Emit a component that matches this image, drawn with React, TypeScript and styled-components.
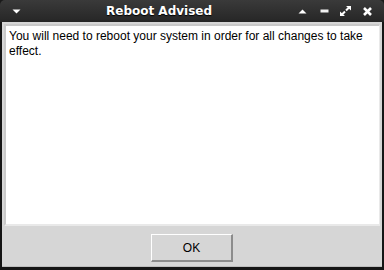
import React from "react";
import styled, { createGlobalStyle } from "styled-components";

const GlobalStyle = createGlobalStyle`
  html, body {
    margin: 0;
    padding: 0;
    background: #1a1a1a;
  }
`;

const Window = styled.div`
  width: 384px;
  height: 270px;
  display: flex;
  flex-direction: column;
  background: #151515;
  border-radius: 5px 5px 0 0;
  overflow: hidden;
  box-sizing: border-box;
`;

const TitleBar = styled.div`
  height: 22px;
  display: flex;
  align-items: center;
  position: relative;
  background: linear-gradient(#3a3a3a, #262626);
  color: #fff;
  font-family: "DejaVu Sans", sans-serif;
  font-weight: bold;
  font-size: 12px;
`;

const Title = styled.div`
  position: absolute;
  left: 106px;
  top: 4px;
  text-shadow: 0 1px 1px #000;
`;

const MenuButton = styled.div`
  width: 32px;
  display: flex;
  justify-content: center;
`;

const Controls = styled.div`
  margin-left: auto;
  display: flex;
  align-items: center;
  padding-right: 6px;
`;

const Control = styled.div`
  width: 21.5px;
  height: 22px;
  display: flex;
  align-items: center;
  justify-content: center;
`;

const Body = styled.div`
  flex: 1;
  margin: 0 2px 3px 2px;
  background: #d6d6d6;
  display: flex;
  flex-direction: column;
  padding: 2px 2px 0 2px;
  border-bottom: 1px solid #bdbdbd;
`;

const MessageBox = styled.div`
  height: 202px;
  background: #fff;
  border: 2px solid #e9e9e9;
  border-right-width: 1px;
  border-top-color: #c9c9c9;
  border-left-color: #c9c9c9;
  padding: 3px 0 2px 3px;
  font-family: "Liberation Sans", Arial, sans-serif;
  font-size: 12px;
  line-height: 15px;
  color: #000;
  box-sizing: border-box;
`;

const ButtonRow = styled.div`
  flex: 1;
  display: flex;
  justify-content: center;
  align-items: center;
  padding-top: 4px;
`;

const Button = styled.button`
  width: 82px;
  height: 28px;
  background: #d6d6d6;
  border: none;
  border-top: 1px solid #fff;
  border-left: 1px solid #fff;
  border-right: 2px solid #8c8c8c;
  border-bottom: 2px solid #8c8c8c;
  font-family: "Liberation Sans", Arial, sans-serif;
  font-size: 12px;
  color: #000;
  padding: 0;
`;

const App: React.FC = () => {
  return (
    <>
      <GlobalStyle />
      <Window>
        <TitleBar>
          <MenuButton>
            <svg width="9" height="5" viewBox="0 0 9 5">
              <path d="M0.5 0.5 L8.5 0.5 L4.5 4.5 Z" fill="#fff" />
            </svg>
          </MenuButton>
          <Title>Reboot Advised</Title>
          <Controls>
            <Control>
              <svg width="9" height="5" viewBox="0 0 9 5">
                <path d="M0.5 4.5 L4.5 0.5 L8.5 4.5 Z" fill="#fff" />
              </svg>
            </Control>
            <Control>
              <svg width="9" height="4" viewBox="0 0 9 4">
                <rect x="0.5" y="0.5" width="8" height="3" fill="#f2f2f2" />
              </svg>
            </Control>
            <Control>
              <svg width="11" height="10" viewBox="0 0 11 10">
                <path d="M11 0 L6 0 L11 4.5 Z M0 10 L5 10 L0 5.5 Z" fill="#fff" />
                <path d="M9 1.5 L6 4.5 M2 8.5 L5 5.5" stroke="#fff" strokeWidth="2" />
              </svg>
            </Control>
            <Control>
              <svg width="9" height="9" viewBox="0 0 9 9">
                <path d="M1 1 L8 8 M8 1 L1 8" stroke="#fff" strokeWidth="2.6" />
              </svg>
            </Control>
          </Controls>
        </TitleBar>
        <Body>
          <MessageBox>
            You will need to reboot your system in order for all changes to take effect.
          </MessageBox>
          <ButtonRow>
            <Button>OK</Button>
          </ButtonRow>
        </Body>
      </Window>
    </>
  );
};

export default App;
